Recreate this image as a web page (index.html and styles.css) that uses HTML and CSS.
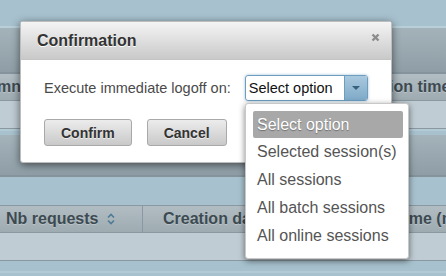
FILE: index.html
```html
<!DOCTYPE html>
<html lang="en">
<head>
    <meta charset="UTF-8">
    <meta name="viewport" content="width=device-width, initial-scale=1.0">
    <title>Sessions</title>
    <link rel="stylesheet" href="styles.css">
</head>
<body>
    <div class="page">
        <div class="gap-top"></div>
        <div class="toolbar"></div>
        <div class="thead">
            <div class="th th-first"><span>Column</span></div>
            <div class="th th-mid">Login</div>
            <div class="th th-last">Connection time</div>
        </div>
        <div class="trow"></div>
        <div class="gap-mid"></div>
        <div class="toolbar toolbar-low"></div>
        <div class="gap-blue"></div>
        <div class="thead">
            <div class="th th-req">Nb requests
                <svg class="sort" width="8" height="12" viewBox="0 0 8 12">
                    <path d="M1 4.5 L4 1.5 L7 4.5 M1 7.5 L4 10.5 L7 7.5" fill="none" stroke="#4f7b96" stroke-width="1.6"/>
                </svg>
            </div>
            <div class="th th-date">Creation date</div>
            <div class="th th-idle">Idle time (min)</div>
        </div>
        <div class="trow"></div>
        <div class="gap-bottom"></div>
    </div>

    <div class="dialog">
        <div class="dialog-title">
            <span>Confirmation</span>
            <svg class="close" width="9" height="9" viewBox="0 0 9 9">
                <path d="M1.5 1.5 L7.5 7.5 M7.5 1.5 L1.5 7.5" stroke="#8c8c8c" stroke-width="2.4"/>
            </svg>
        </div>
        <div class="dialog-body">
            <div class="field">
                <label>Execute immediate logoff on:</label>
                <div class="select">
                    <span class="select-text">Select option</span>
                    <span class="select-btn"><span class="caret"></span></span>
                </div>
            </div>
            <div class="actions">
                <button type="button">Confirm</button>
                <button type="button">Cancel</button>
            </div>
        </div>
    </div>

    <ul class="options">
        <li class="active">Select option</li>
        <li>Selected session(s)</li>
        <li>All sessions</li>
        <li>All batch sessions</li>
        <li>All online sessions</li>
    </ul>
</body>
</html>
```

FILE: styles.css
```css
body {
    margin: 0;
    background-color: #a7c1ce;
    font-family: "Liberation Sans", Arial, sans-serif;
    overflow: hidden;
}
.page {
    width: 446px;
    height: 276px;
    display: flex;
    flex-direction: column;
}
.gap-top {
    height: 26px;
    border-bottom: 2px solid #b8cfda;
}
.toolbar {
    height: 44px;
    background: linear-gradient(#a4b3ba, #8f9ea6);
    border-bottom: 2px solid #85949c;
}
.toolbar-low {
    height: 40px;
}
.thead {
    height: 26px;
    display: flex;
    background: linear-gradient(#b1bdc3, #9eabb1);
    border-bottom: 1px solid #8a989f;
    color: #3d4a51;
    font-size: 16px;
    font-weight: bold;
    text-shadow: 0 1px 0 rgba(255,255,255,0.25);
}
.th {
    display: flex;
    align-items: center;
    white-space: nowrap;
    overflow: hidden;
    box-sizing: border-box;
}
.th-first {
    width: 22px;
    justify-content: flex-end;
    border-right: 1px solid #8a989f;
}
.th-mid {
    width: 303px;
    padding-left: 10px;
}
.th-last {
    flex: 1;
}
.th-req {
    width: 143px;
    padding-left: 6px;
    border-right: 1px solid #8a989f;
}
.sort {
    margin-left: 9px;
}
.th-date {
    width: 224px;
    padding-left: 20px;
}
.th-idle {
    flex: 1;
}
.trow {
    height: 27px;
    background-color: #bfccd3;
    border-bottom: 1px solid #8a989f;
}
.gap-mid {
    height: 6px;
    border-top: 2px solid #b3cad5;
    box-sizing: border-box;
}
.gap-blue {
    height: 28px;
    border-bottom: 1px solid #8a989f;
}
.gap-bottom {
    height: 10px;
    border-bottom: 2px solid #b3cad5;
}

/* confirmation dialog */
.dialog {
    position: absolute;
    left: 20px;
    top: 21px;
    width: 372px;
    background-color: #fff;
    border: 1px solid #bdbdbd;
    border-radius: 3px;
    box-shadow: 0 2px 8px rgba(0,0,0,0.55);
    box-sizing: border-box;
}
.dialog-title {
    height: 38px;
    display: flex;
    align-items: center;
    justify-content: space-between;
    padding: 0 11px 0 16px;
    box-sizing: border-box;
    background: linear-gradient(#f4f4f4, #c9c9c9);
    border-bottom: 1px solid #c4c4c4;
    color: #333;
    font-size: 16px;
    font-weight: bold;
    text-shadow: 0 1px 0 #fff;
}
.close {
    margin-top: -6px;
}
.dialog-body {
    padding: 15px 23px 16px;
}
.field {
    display: flex;
    align-items: center;
    gap: 14px;
    color: #4a4a4a;
    font-size: 14.5px;
}
.select {
    width: 123px;
    height: 26px;
    display: flex;
    border: 1px solid #6d9dbf;
    border-radius: 3px;
    box-shadow: 0 0 3px rgba(93,145,181,0.6);
    box-sizing: border-box;
    overflow: hidden;
}
.select-text {
    flex: 1;
    padding-left: 3px;
    line-height: 24px;
    color: #111;
    font-size: 14.5px;
}
.select-btn {
    width: 22px;
    display: flex;
    align-items: center;
    justify-content: center;
    background: linear-gradient(#a9c9de, #7faac8);
    border-left: 1px solid #6d9dbf;
}
.caret {
    border-left: 4px solid transparent;
    border-right: 4px solid transparent;
    border-top: 4px solid #37617d;
}
.actions {
    display: flex;
    gap: 15px;
    margin-top: 18px;
}
button {
    height: 27px;
    padding: 0 16px;
    background: linear-gradient(#ececec, #c9c9c9);
    border: 1px solid #a9a9a9;
    border-radius: 3px;
    color: #333;
    font-family: "Liberation Sans", Arial, sans-serif;
    font-size: 14px;
    font-weight: bold;
    text-shadow: 0 1px 0 rgba(255,255,255,0.6);
}

/* open select menu */
.options {
    position: absolute;
    left: 245px;
    top: 103px;
    width: 164px;
    margin: 0;
    padding: 6px 5px 8px 7px;
    list-style: none;
    background-color: #fff;
    border: 1px solid #c8c8c8;
    border-radius: 3px;
    box-shadow: 0 2px 6px rgba(0,0,0,0.5);
    box-sizing: border-box;
}
.options li {
    height: 28px;
    line-height: 28px;
    padding-left: 4px;
    color: #555;
    font-size: 16px;
    white-space: nowrap;
}
.options li.active {
    height: 27px;
    line-height: 27px;
    margin-top: 1px;
    background-color: #a8a8a8;
    border-radius: 2px;
    color: #fff;
    text-shadow: 0 1px 1px rgba(0,0,0,0.35);
}
```
